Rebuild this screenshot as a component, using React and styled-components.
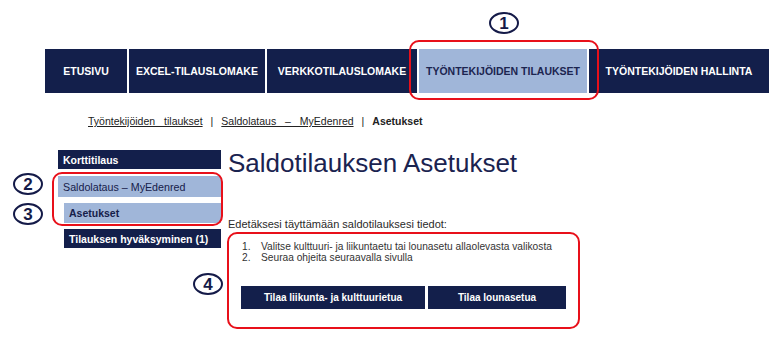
import React from "react";
import styled, { createGlobalStyle } from "styled-components";

const Global = createGlobalStyle`
  html, body { margin: 0; padding: 0; background: #fff; }
  body { font-family: "Liberation Sans", Arial, sans-serif; width: 770px; height: 338px; overflow: hidden; }
  * { box-sizing: border-box; }
`;

const NAVY = "#131f4b";
const LIGHT = "#a0b6d9";
const RED = "#e8101a";

const Page = styled.div`
  position: relative;
  width: 770px;
  height: 338px;
  padding-top: 49px;
`;

const Nav = styled.nav`
  display: flex;
  gap: 2px;
  margin-left: 45px;
  margin-right: 1px;
  height: 44px;
`;

const NavItem = styled.a`
  flex: ${(p) => (p.$grow ? "1 1 auto" : `0 0 ${p.$w}px`)};
  display: flex;
  align-items: center;
  justify-content: center;
  background: ${(p) => (p.$active ? LIGHT : NAVY)};
  color: ${(p) => (p.$active ? "#1c2550" : "#fff")};
  font-weight: bold;
  font-size: 10.5px;
  text-transform: uppercase;
  white-space: nowrap;
`;

const Crumbs = styled.div`
  display: flex;
  align-items: center;
  gap: 8px;
  margin: 17px 0 0 88px;
  height: 22px;
  font-size: 10.5px;
  color: #222;
`;

const Crumb = styled.a`
  text-decoration: underline;
  word-spacing: 6px;
  color: #222;
`;

const Sep = styled.span`
  color: #222;
`;

const Current = styled.span`
  font-weight: bold;
`;

const Body = styled.div`
  display: flex;
  margin-left: 58px;
`;

const Side = styled.ul`
  list-style: none;
  margin: 18px 0 0 0;
  padding: 0;
  width: 163px;
  display: flex;
  flex-direction: column;
  gap: 6px;
`;

const SideItem = styled.li`
  margin-left: ${(p) => (p.$sub ? 6 : 0)}px;
  height: ${(p) => p.$h || 20}px;
  margin-bottom: ${(p) => p.$mb || 0}px;
  display: flex;
  align-items: center;
  padding-left: 5px;
  background: ${(p) => (p.$active ? LIGHT : NAVY)};
  color: ${(p) => (p.$active ? "#16204a" : "#fff")};
  font-weight: ${(p) => (p.$regular ? "normal" : "bold")};
  font-size: ${(p) => (p.$regular ? "10.7px" : "10.5px")};
`;

const Main = styled.div`
  margin-left: 7px;
  display: flex;
  flex-direction: column;
`;

const Title = styled.h1`
  margin: 15px 0 0 0;
  font-weight: normal;
  font-size: 26px;
  line-height: 32px;
  color: #1a2350;
`;

const Lead = styled.p`
  margin: 38px 0 0 0;
  font-size: 11px;
  color: #2a2a2a;
  line-height: 14px;
`;

const Steps = styled.ol`
  margin: 10px 0 0 0;
  padding: 0 0 0 14px;
  list-style: none;
  counter-reset: step;
  font-size: 10.2px;
  line-height: 11px;
  color: #333;
`;

const Step = styled.li`
  counter-increment: step;
  display: flex;
  &::before {
    content: counter(step) ".";
    width: 19px;
  }
`;

const Buttons = styled.div`
  display: flex;
  gap: 3px;
  margin: 23px 0 0 13px;
`;

const Button = styled.button`
  width: ${(p) => p.$w}px;
  height: 23px;
  border: 0;
  background: ${NAVY};
  color: #fff;
  font-family: "Liberation Sans", Arial, sans-serif;
  font-weight: bold;
  font-size: 10px;
  padding: 0;
`;

const Highlight = styled.div`
  position: absolute;
  left: ${(p) => p.$x}px;
  top: ${(p) => p.$y}px;
  width: ${(p) => p.$w}px;
  height: ${(p) => p.$h}px;
  border: 2px solid ${RED};
  border-radius: 10px;
  pointer-events: none;
`;

const Badge = styled.div`
  position: absolute;
  left: ${(p) => p.$x}px;
  top: ${(p) => p.$y}px;
  width: 30px;
  height: 22px;
  border: 2.5px solid #141a48;
  border-radius: 50%;
  display: flex;
  align-items: center;
  justify-content: center;
  font-family: "Liberation Sans", Arial, sans-serif;
  font-weight: bold;
  font-size: 17px;
  color: #141a48;
  line-height: 1;
`;

export default function App() {
  return (
    <>
      <Global />
      <Page>
        <Nav>
          <NavItem $w={82}>Etusivu</NavItem>
          <NavItem $w={136}>Excel-tilauslomake</NavItem>
          <NavItem $w={150}>Verkkotilauslomake</NavItem>
          <NavItem $w={168} $active>Työntekijöiden tilaukset</NavItem>
          <NavItem $grow>Työntekijöiden hallinta</NavItem>
        </Nav>
        <Crumbs>
          <Crumb>Työntekijöiden tilaukset</Crumb>
          <Sep>|</Sep>
          <Crumb>Saldolataus – MyEdenred</Crumb>
          <Sep>|</Sep>
          <Current>Asetukset</Current>
        </Crumbs>
        <Body>
          <Side>
            <SideItem $h={19} $mb={1}>Korttitilaus</SideItem>
            <SideItem $h={21} $active $regular>Saldolataus – MyEdenred</SideItem>
            <SideItem $sub $active>Asetukset</SideItem>
            <SideItem $sub $h={19}>Tilauksen hyväksyminen (1)</SideItem>
          </Side>
          <Main>
            <Title>Saldotilauksen Asetukset</Title>
            <Lead>Edetäksesi täyttämään saldotilauksesi tiedot:</Lead>
            <Steps>
              <Step>Valitse kulttuuri- ja liikuntaetu tai lounasetu allaolevasta valikosta</Step>
              <Step>Seuraa ohjeita seuraavalla sivulla</Step>
            </Steps>
            <Buttons>
              <Button $w={184}>Tilaa liikunta- ja kulttuurietua</Button>
              <Button $w={138}>Tilaa lounasetua</Button>
            </Buttons>
          </Main>
        </Body>
        <Highlight $x={409} $y={40} $w={190} $h={60} />
        <Highlight $x={52} $y={172} $w={171} $h={54} />
        <Highlight $x={227} $y={232} $w={353} $h={97} />
        <Badge $x={489} $y={12}>1</Badge>
        <Badge $x={13} $y={173}>2</Badge>
        <Badge $x={13} $y={203}>3</Badge>
        <Badge $x={193} $y={273}>4</Badge>
      </Page>
    </>
  );
}
